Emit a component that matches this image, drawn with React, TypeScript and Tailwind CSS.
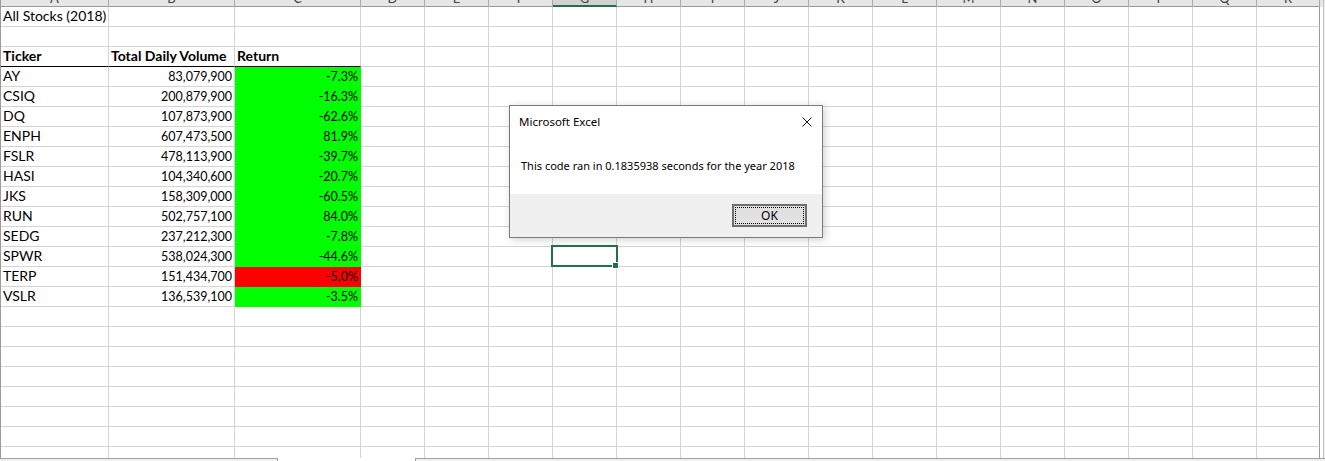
import React from 'react';

const LETTERS = ['A', 'B', 'C', 'D', 'E', 'F', 'G', 'H', 'I', 'J', 'K', 'L', 'M', 'N', 'O', 'P', 'Q', 'R'];
const WIDTHS = [
  'w-[108px]', 'w-[126px]', 'w-[126px]', 'w-[64px]',
  'w-[64px]', 'w-[64px]', 'w-[64px]', 'w-[64px]', 'w-[64px]', 'w-[64px]', 'w-[64px]',
  'w-[64px]', 'w-[64px]', 'w-[64px]', 'w-[64px]', 'w-[64px]', 'w-[64px]', 'w-[63px]',
];
const ROW_COUNT = 23;

type Cell = {
  text?: string;
  right?: boolean;
  bold?: boolean;
  fill?: 'green' | 'red';
  thickBottom?: boolean;
};

const stocks: [string, string, string, 'green' | 'red'][] = [
  ['AY', '83,079,900', '-7.3%', 'green'],
  ['CSIQ', '200,879,900', '-16.3%', 'green'],
  ['DQ', '107,873,900', '-62.6%', 'green'],
  ['ENPH', '607,473,500', '81.9%', 'green'],
  ['FSLR', '478,113,900', '-39.7%', 'green'],
  ['HASI', '104,340,600', '-20.7%', 'green'],
  ['JKS', '158,309,000', '-60.5%', 'green'],
  ['RUN', '502,757,100', '84.0%', 'green'],
  ['SEDG', '237,212,300', '-7.8%', 'green'],
  ['SPWR', '538,024,300', '-44.6%', 'green'],
  ['TERP', '151,434,700', '-5.0%', 'red'],
  ['VSLR', '136,539,100', '-3.5%', 'green'],
];

function buildRows(): Record<number, Cell>[] {
  const rows: Record<number, Cell>[] = [];
  for (let i = 0; i < ROW_COUNT; i++) rows.push({});
  rows[0][0] = { text: 'All Stocks (2018)' };
  rows[2][0] = { text: 'Ticker', bold: true, thickBottom: true };
  rows[2][1] = { text: 'Total Daily Volume', bold: true, thickBottom: true };
  rows[2][2] = { text: 'Return', bold: true, thickBottom: true };
  stocks.forEach(([ticker, vol, ret, fill], i) => {
    rows[3 + i][0] = { text: ticker };
    rows[3 + i][1] = { text: vol, right: true };
    rows[3 + i][2] = { text: ret, right: true, fill };
  });
  return rows;
}

function GridCell({ col, cell }: { col: number; cell?: Cell }) {
  const last = col === LETTERS.length - 1;
  let right = last ? 'border-r-[#9b9b9b]' : 'border-r-[#d4d4d4]';
  let bottom = 'border-b-[#d4d4d4]';
  let bg = 'bg-white';
  if (cell?.fill === 'green') {
    right = 'border-r-[#00ff00]';
    bottom = 'border-b-[#00ff00]';
    bg = 'bg-[#00ff00]';
  } else if (cell?.fill === 'red') {
    right = 'border-r-[#ff0000]';
    bottom = 'border-b-[#ff0000]';
    bg = 'bg-[#ff0000]';
  }
  if (cell?.thickBottom) bottom = 'border-b-black';

  // numbers sit right-aligned and a touch smaller, Lato digits run wide
  const size = cell?.right ? 'text-[12.5px] pb-[3px]' : 'text-[14px] pb-[3px]';

  return (
    <div
      className={`${WIDTHS[col]} ${right} ${bottom} ${bg} h-full shrink-0 border-r border-b flex items-end px-[2px] ${
        cell?.right ? 'justify-end' : 'justify-start'
      } ${cell?.text ? size : ''}`}
    >
      {cell?.text && (
        <span className={`whitespace-nowrap leading-none text-black ${cell.bold ? 'font-bold' : ''}`}>
          {cell.text}
        </span>
      )}
    </div>
  );
}

function ColumnHeader() {
  return (
    <div className="flex h-[7px] bg-[#e6e6e6]">
      {LETTERS.map((l, i) => (
        <div
          key={l}
          className={`${WIDTHS[i]} h-full shrink-0 overflow-hidden border-r border-b border-r-[#ababab] ${
            l === 'G' ? 'bg-[#d2d2d2] border-b-2 border-b-[#217346]' : 'border-b-[#9b9b9b]'
          }`}
        >
          <div className="-mt-[12px] h-[20px] text-center text-[13px] leading-[20px] text-[#444]">{l}</div>
        </div>
      ))}
    </div>
  );
}

function MessageBox() {
  return (
    <div
      className="absolute left-[509px] top-[105px] flex h-[133px] w-[314px] flex-col border border-[#7a7a7a] bg-white shadow-[2px_2px_8px_rgba(0,0,0,0.18)]"
      style={{ fontFamily: '"Noto Sans", "Open Sans", sans-serif' }}
    >
      <div className="flex h-[31px] items-center justify-between pl-[9px] pr-[10px]">
        <span className="text-[11.5px] text-black">Microsoft Excel</span>
        <svg width="10" height="10" viewBox="0 0 10 10" className="mt-[1px]">
          <path d="M0.5 0.5 L9.5 9.5 M9.5 0.5 L0.5 9.5" stroke="#111" strokeWidth="1" fill="none" />
        </svg>
      </div>
      <div className="mt-[21px] pl-[11px] text-[11px] leading-[16px] text-black">
        This code ran in 0.1835938 seconds for the year 2018
      </div>
      <div className="mt-auto flex h-[43px] items-start justify-end bg-[#f0f0f0] pr-[15px] pt-[10px]">
        <div className="flex h-[23px] w-[75px] items-center justify-center border-2 border-[#6f6f6f] bg-[#e1e1e1] p-[1px]">
          <div className="flex h-full w-full items-center justify-center border border-dotted border-black text-[12px] text-black">
            OK
          </div>
        </div>
      </div>
    </div>
  );
}

export default function App() {
  const rows = buildRows();
  return (
    <div
      className="relative h-[461px] w-[1325px] overflow-hidden bg-white"
      style={{ fontFamily: 'Lato, "Liberation Sans", sans-serif' }}
    >
      <div className="flex">
        <div className="h-[458px] overflow-hidden border-l border-[#9b9b9b]">
          <ColumnHeader />
          {rows.map((r, ri) => (
            <div key={ri} className="flex h-[20px]">
              {LETTERS.map((_, ci) => (
                <GridCell key={ci} col={ci} cell={r[ci]} />
              ))}
            </div>
          ))}
        </div>
        <div className="flex h-[458px] flex-1">
          <div className="h-full w-[3px] bg-white">
            <div className="h-[7px] bg-[#e6e6e6]" />
          </div>
          <div className="h-full flex-1 border-l border-[#c4c4c4] bg-[#f0f0f0]" />
        </div>
      </div>

      {/* sheet tab strip */}
      <div className="flex h-[3px]">
        <div className="h-full w-[278px] border-t border-r border-[#a0a0a0] bg-[#f0f0f0]" />
        <div className="h-full w-[137px] bg-white" />
        <div className="h-full flex-1 border-t border-l border-[#a0a0a0] bg-[#f0f0f0]" />
      </div>

      {/* active cell G13 */}
      <div className="absolute left-[551px] top-[245px] h-[22px] w-[67px] border-2 border-[#217346]" />
      <div className="absolute left-[612px] top-[262px] h-[7px] w-[7px] border border-white bg-[#217346]" />

      <MessageBox />
    </div>
  );
}
